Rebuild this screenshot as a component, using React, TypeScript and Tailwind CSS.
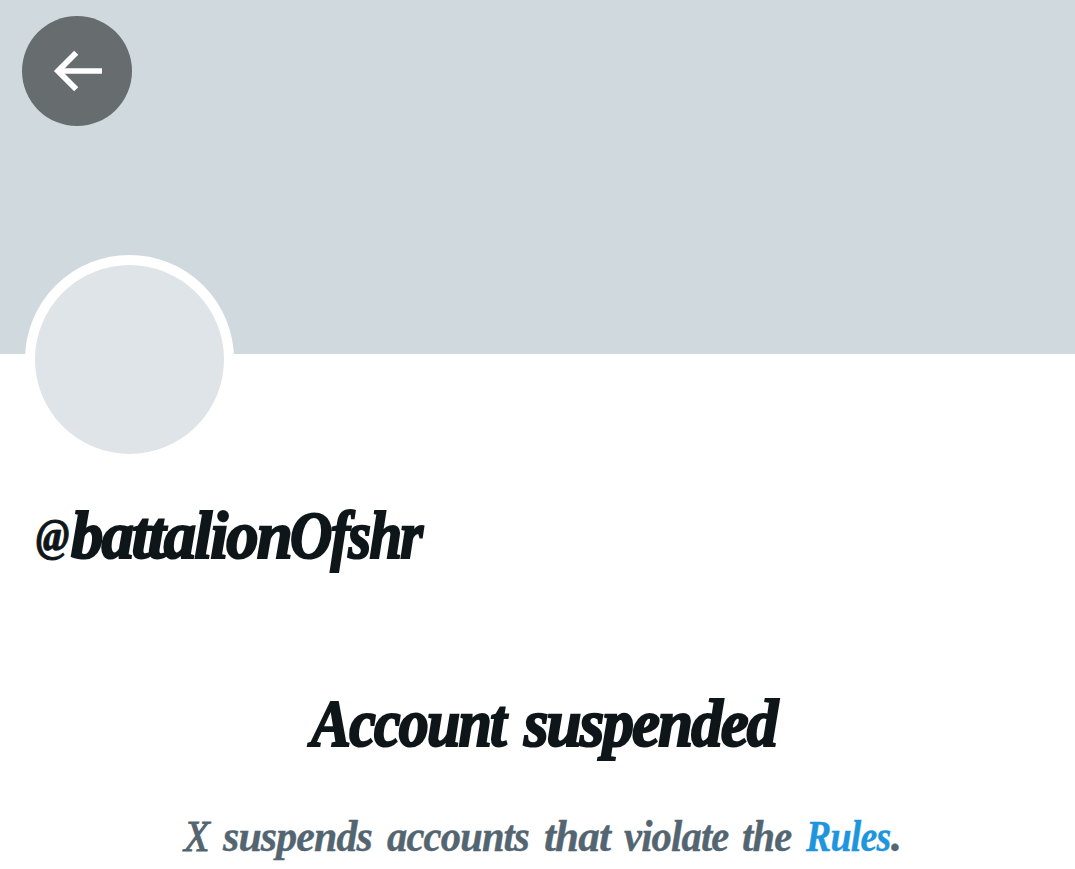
import React from 'react';

type WordProps = { children: string; box: string; stretch: string };

/* A word of fixed width whose glyphs are condensed to fill it. */
function Word({ children, box, stretch }: WordProps) {
  return (
    <span className={`block shrink-0 whitespace-pre ${box}`}>
      <span className={`inline-block origin-left ${stretch}`}>{children}</span>
    </span>
  );
}

export default function App() {
  return (
    <main className="h-[869px] w-[1075px] overflow-hidden bg-white font-['Liberation_Serif',serif] font-bold italic text-[#0f161a]">
      <header className="h-[354px] bg-[#d0d9de] pl-[22px] pt-4">
        <button
          aria-label="Back"
          className="flex size-[110px] items-center justify-center rounded-full bg-[#676d6f]"
        >
          <svg className="size-[110px]" viewBox="0 0 110 110" fill="none" stroke="white">
            <path d="M80 55H37" strokeWidth="5.6" />
            <path d="M54.2 36.8L36 55L54.2 73.2" strokeWidth="5.8" />
          </svg>
        </button>
      </header>

      <section className="-mt-[99px] pl-[25px]">
        <div className="size-[209px] rounded-full border-[10px] border-white bg-[#dee4e8]" />
        <h1 className="mt-[31px] flex pl-[11px] text-[67px] leading-[80px] tracking-[-0.03em] [-webkit-text-stroke:2.2px_currentColor]">
          <span className="w-[35px] shrink-0 pt-px text-[46px] [-webkit-text-stroke:1px_currentColor]">
            <span className="inline-block origin-left scale-x-[0.87]">@</span>
          </span>
          <Word box="w-[219px]" stretch="scale-x-[0.965]">battalion</Word>
          <Word box="w-[140px]" stretch="scale-x-[0.875]">Ofshr</Word>
        </h1>
      </section>

      <section className="mt-[107px]">
        <h2 className="flex pl-[311px] text-[67px] leading-[80px] tracking-[-0.03em] [-webkit-text-stroke:2.2px_currentColor]">
          <Word box="w-[213px]" stretch="scale-x-[0.895]">Account</Word>
          <Word box="w-[260px]" stretch="scale-x-[0.94]">suspended</Word>
        </h2>
        <p className="mt-[49px] flex pl-[184px] text-[44px] leading-[50px] tracking-[-0.02em] text-[#536571] [-webkit-text-stroke:0.4px_currentColor]">
          <span className="font-normal [-webkit-text-stroke:1px_currentColor]">
            <Word box="w-[39px]" stretch="scale-x-[0.95]">X</Word>
          </span>
          <Word box="w-[164px]" stretch="scale-x-[0.95]">suspends</Word>
          <Word box="w-[157px]" stretch="scale-x-[0.92]">accounts</Word>
          <Word box="w-[80px]" stretch="scale-x-[0.98]">that</Word>
          <Word box="w-[118px]" stretch="scale-x-[0.92]">violate</Word>
          <Word box="w-[64px]" stretch="scale-x-[0.92]">the</Word>
          <a className="text-[#1d96dd]">
            <Word box="w-[85px]" stretch="scale-x-[0.86]">Rules</Word>
          </a>
          <span>.</span>
        </p>
      </section>
    </main>
  );
}
